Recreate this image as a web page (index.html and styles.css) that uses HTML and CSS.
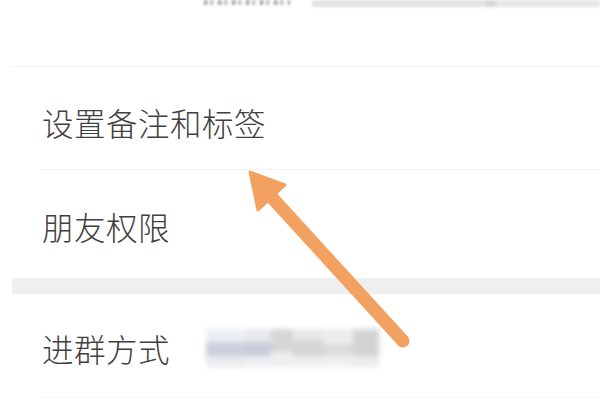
FILE: index.html
```html
<!DOCTYPE html>
<html lang="zh-CN">
<head>
<meta charset="utf-8">
<link rel="stylesheet" href="styles.css">
</head>
<body>
<div class="page">
  <div class="top-row">
    <div class="top-content">
      <span class="top-label"></span>
      <span class="top-value"></span>
    </div>
  </div>
  <div class="row row-first">
    <span class="label">设置备注和标签</span>
  </div>
  <div class="row row-second">
    <span class="label">朋友权限</span>
  </div>
  <div class="gap"></div>
  <div class="row row-third">
    <span class="label">进群方式</span>
    <span class="mosaic">
      <i class="b b1"></i><i class="b b2"></i><i class="b b3"></i><i class="b b4"></i><i class="b b5"></i><i class="b b6"></i>
    </span>
  </div>
  <svg class="arrow" width="600" height="400" viewBox="0 0 600 400">
    <line x1="265" y1="190" x2="403" y2="341" stroke="#f2a160" stroke-width="13" stroke-linecap="round"/>
    <polygon points="250,172 285,185 258,210" fill="#f2a160" stroke="#f2a160" stroke-width="3" stroke-linejoin="round"/>
  </svg>
</div>
</body>
</html>
```
FILE: styles.css
```css
html, body {
  margin: 0;
  padding: 0;
  background: #ffffff;
}
body {
  font-family: "Noto Sans CJK SC", "Noto Sans", sans-serif;
  color: #353535;
}
.page {
  position: relative;
  width: 600px;
  height: 400px;
  overflow: hidden;
}
.top-row {
  height: 66px;
  margin-left: 12px;
  border-bottom: 1px solid #f2f2f2;
  overflow: hidden;
}
.top-content {
  display: flex;
  align-items: flex-start;
  height: 8px;
  padding-left: 192px;
  gap: 22px;
}
.top-label {
  width: 86px;
  height: 5px;
  flex: none;
  background: repeating-linear-gradient(90deg, #8a8a8a 0 3px, #e0e0e0 3px 7px, #9a9a9a 7px 9px, #f4f4f4 9px 14px);
  filter: blur(1px);
  opacity: 0.7;
}
.top-value {
  flex: 1;
  height: 7px;
  background: linear-gradient(90deg, #e3e3e3 0 60%, #d6d6d6 60% 64%, #e6e6e6 64% 100%);
  filter: blur(1.5px);
}
.row {
  display: flex;
  align-items: center;
  margin-left: 40px;
  padding-left: 2px;
  border-bottom: 1px solid #f4f4f4;
  box-sizing: border-box;
}
.row-first {
  height: 103px;
  padding-top: 8px;
}
.row-second {
  height: 108px;
  border-bottom: none;
  padding-top: 4px;
}
.row-third {
  height: 104px;
  padding-top: 4px;
}
.label {
  font-size: 31.5px;
  font-weight: 300;
  line-height: 40px;
  letter-spacing: 0.5px;
  color: #404040;
}
.gap {
  height: 16px;
  margin-left: 12px;
  background: #efefef;
}
.mosaic {
  display: grid;
  grid-template-columns: 40px 25px 22px 30px 30px 26px;
  height: 38px;
  margin-left: 36px;
  filter: blur(2.5px);
  opacity: 0.9;
}
.b { display: block; }
.b1 { background: linear-gradient(#eceef3 0 35%, #c6c9d8 35% 70%, #e8e9ee 70%); }
.b2 { background: linear-gradient(#e6e7ec 0 35%, #c3c6d5 35% 70%, #eceef2 70%); }
.b3 { background: linear-gradient(#d2d2d4 0 60%, #ececec 60%); }
.b4 { background: linear-gradient(#e6e6e6 0 30%, #d2d2d2 30% 70%, #ededed 70%); }
.b5 { background: linear-gradient(#ebebeb 0 40%, #d8d8d8 40% 70%, #efefef 70%); }
.b6 { background: linear-gradient(#cfcfd2 0 70%, #eaeaea 70%); }
.arrow {
  position: absolute;
  left: 0;
  top: 0;
  pointer-events: none;
}
```
